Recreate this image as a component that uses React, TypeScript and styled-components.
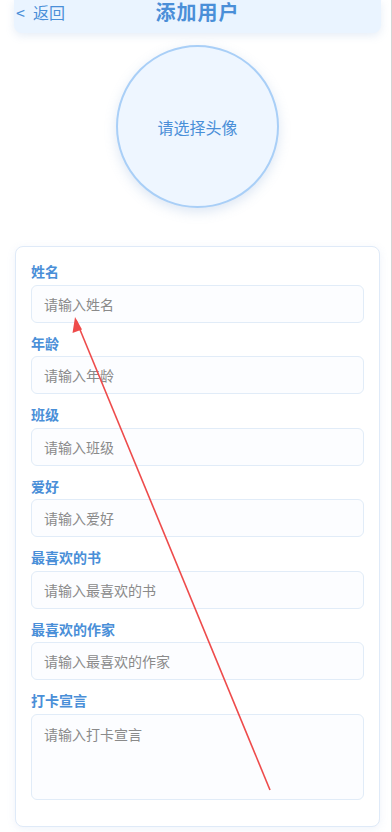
import styled, { createGlobalStyle } from "styled-components";

const GlobalStyle = createGlobalStyle`
  html, body {
    margin: 0;
    padding: 0;
    background: #ffffff;
  }
  body {
    font-family: "Noto Sans CJK SC", "Noto Sans", sans-serif;
  }
  * {
    box-sizing: border-box;
  }
`;

const Page = styled.div`
  position: relative;
  width: 392px;
  min-height: 832px;
  padding: 0 10px 6px 14px;
  border-right: 1px solid #d4d4d4;
  overflow: hidden;
`;

const Header = styled.div`
  position: relative;
  display: flex;
  align-items: flex-start;
  justify-content: center;
  height: 33px;
  margin: 0 0 12px;
  background: #eaf4ff;
  border-radius: 0 0 8px 8px;
  box-shadow: 0 3px 8px rgba(120, 160, 210, 0.18);
`;

const BackButton = styled.button`
  position: absolute;
  left: 2px;
  top: 1px;
  display: flex;
  align-items: center;
  padding: 0;
  border: none;
  background: none;
  font-family: inherit;
  font-size: 16px;
  line-height: 22px;
  color: #4a8fd8;
  cursor: pointer;
`;

const Chevron = styled.span`
  margin-right: 8px;
`;

const Title = styled.h1`
  margin: 0;
  font-size: 20px;
  line-height: 24px;
  font-weight: 700;
  color: #4a8fd8;
  letter-spacing: 1px;
`;

const AvatarWrap = styled.div`
  display: flex;
  justify-content: center;
  padding-bottom: 38px;
`;

const Avatar = styled.div`
  display: flex;
  align-items: center;
  justify-content: center;
  width: 163px;
  height: 163px;
  border-radius: 50%;
  border: 2px solid #a9cff7;
  background: #eef6ff;
  box-shadow: 0 4px 12px rgba(120, 160, 210, 0.25);
  color: #4a8fd8;
  font-size: 16px;
  cursor: pointer;
`;

const Card = styled.form`
  margin: 0 1px;
  padding: 14px 15px 26px 15px;
  background: #ffffff;
  border: 1px solid #dfeaf8;
  border-radius: 8px;
  box-shadow: 0 2px 8px rgba(120, 160, 210, 0.12);
`;

const Group = styled.div`
  display: flex;
  flex-direction: column;
  margin-bottom: 10px;

  &:last-child {
    margin-bottom: 0;
  }
`;

const Label = styled.label`
  font-size: 14px;
  font-weight: 700;
  line-height: 20px;
  color: #4a8fd8;
  margin-bottom: 3.5px;
`;

const fieldStyle = `
  width: 100%;
  border: 1px solid #e1ecf8;
  border-radius: 6px;
  background: #fcfdff;
  font-family: inherit;
  font-size: 14px;
  color: #333;
  outline: none;

  &::placeholder {
    color: #8a8a8a;
  }
`;

const Input = styled.input`
  ${fieldStyle}
  height: 38px;
  padding: 0 12px;
`;

const TextArea = styled.textarea`
  ${fieldStyle}
  height: 86px;
  padding: 9px 12px;
  resize: none;
  line-height: 20px;
`;

const ArrowLayer = styled.svg`
  position: absolute;
  left: 0;
  top: 0;
  pointer-events: none;
`;

const fields = [
  { key: "name", label: "姓名", placeholder: "请输入姓名" },
  { key: "age", label: "年龄", placeholder: "请输入年龄" },
  { key: "class", label: "班级", placeholder: "请输入班级" },
  { key: "hobby", label: "爱好", placeholder: "请输入爱好" },
  { key: "book", label: "最喜欢的书", placeholder: "请输入最喜欢的书" },
  { key: "author", label: "最喜欢的作家", placeholder: "请输入最喜欢的作家" },
];

export default function App() {
  return (
    <>
      <GlobalStyle />
      <Page>
        <Header>
          <BackButton type="button">
            <Chevron>&lt;</Chevron>返回
          </BackButton>
          <Title>添加用户</Title>
        </Header>
        <AvatarWrap>
          <Avatar>请选择头像</Avatar>
        </AvatarWrap>
        <Card onSubmit={(e) => e.preventDefault()}>
          {fields.map((f) => (
            <Group key={f.key}>
              <Label>{f.label}</Label>
              <Input placeholder={f.placeholder} />
            </Group>
          ))}
          <Group>
            <Label>打卡宣言</Label>
            <TextArea placeholder="请输入打卡宣言" />
          </Group>
        </Card>
        {/* annotation arrow drawn over the form */}
        <ArrowLayer width="392" height="832" viewBox="0 0 392 832">
          <line x1="270" y1="790" x2="76" y2="320" stroke="#ee4b4b" strokeWidth="1.6" />
          <polygon points="75,317 72.5,333 82,329.5" fill="#ee4b4b" />
        </ArrowLayer>
      </Page>
    </>
  );
}
